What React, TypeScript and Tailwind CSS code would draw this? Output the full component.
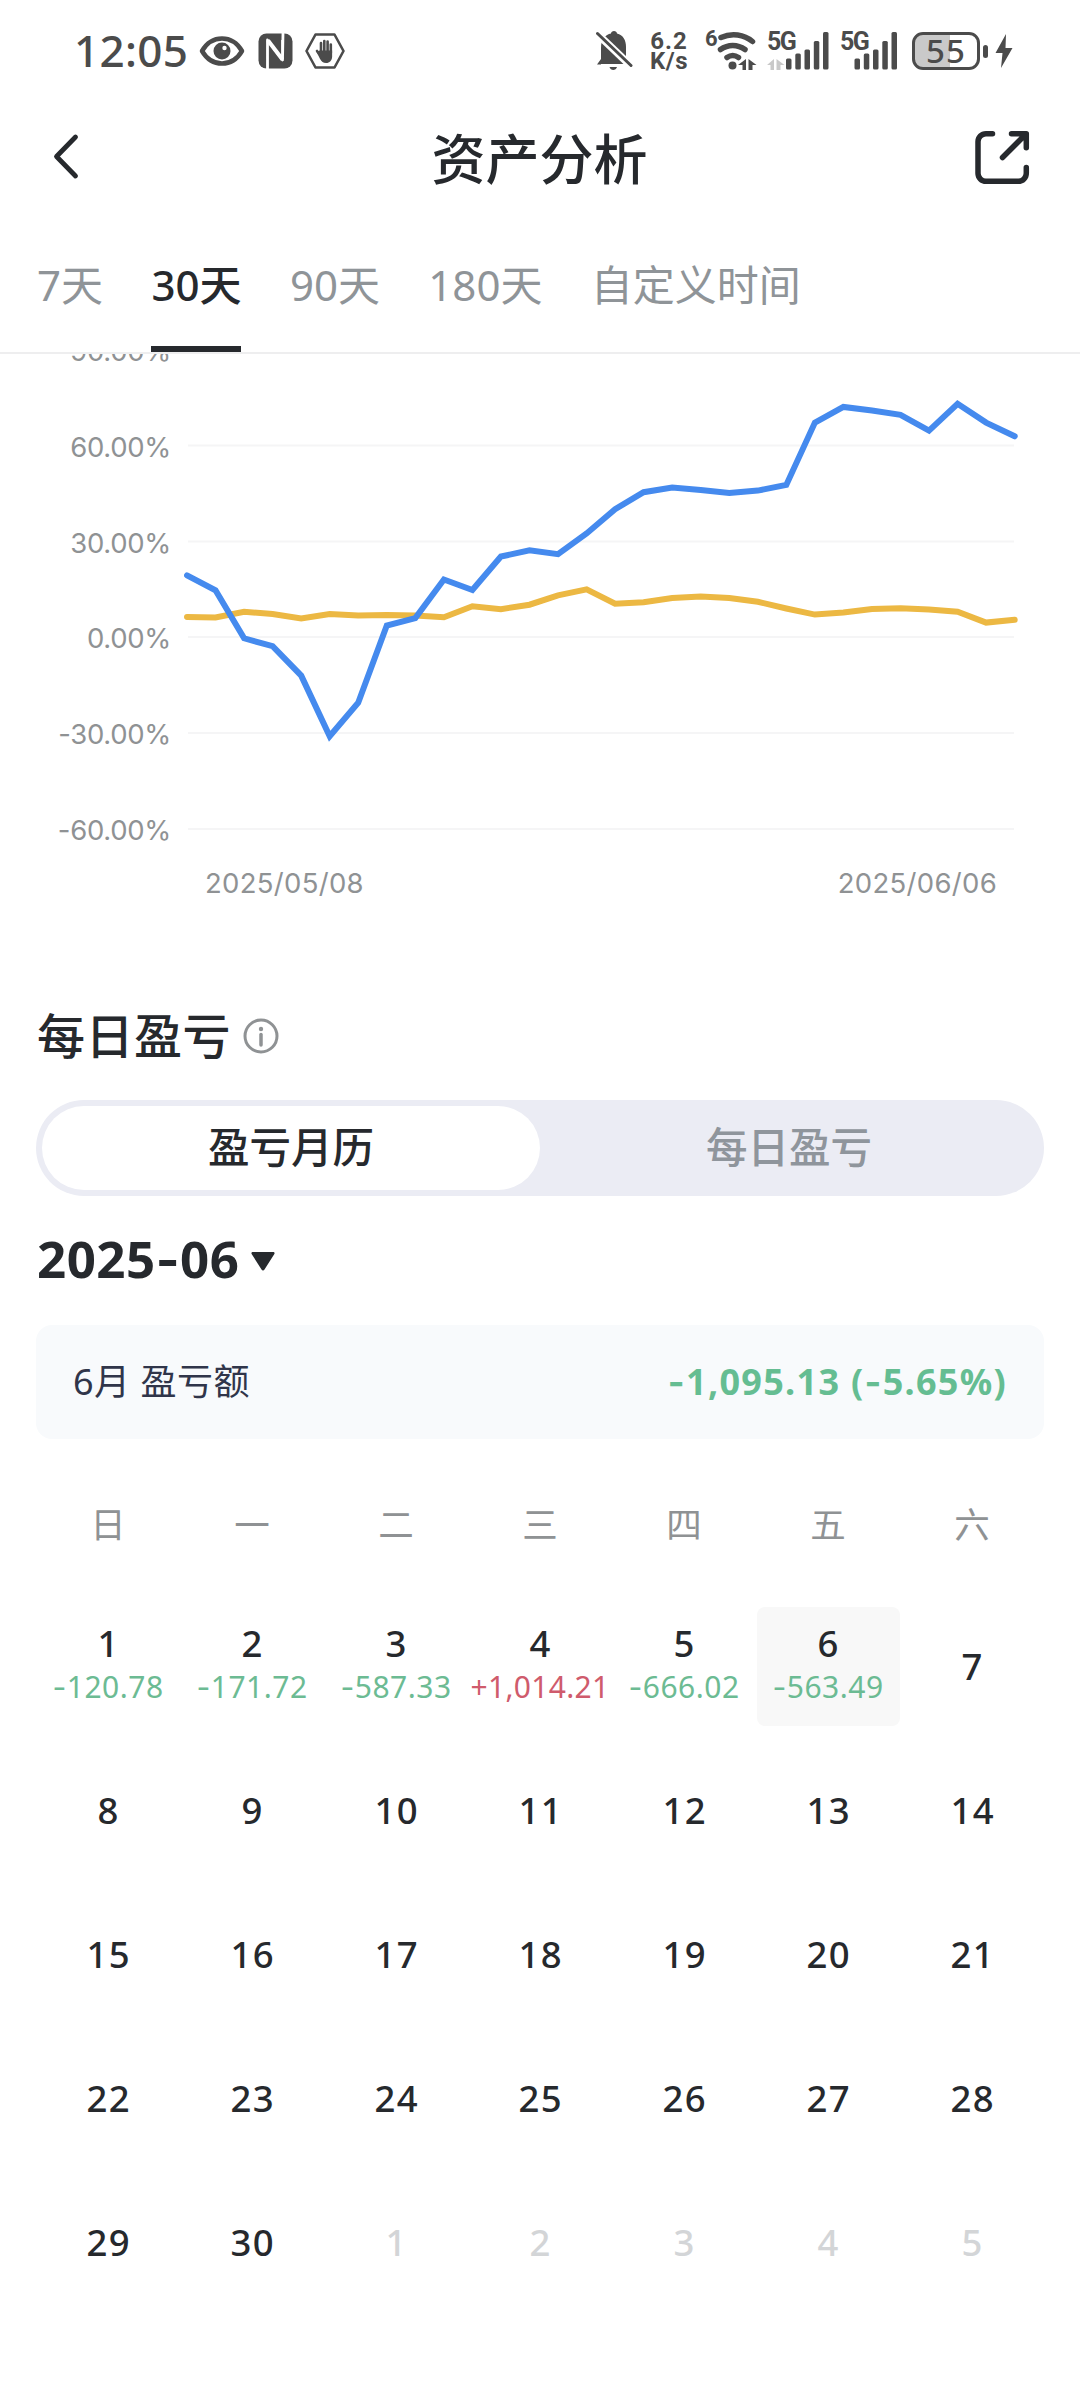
import React from 'react';

const DAILY_RETURN = [
  19.4, 14.7, -0.3, -2.8, -12, -31, -20.5, 3.7, 6, 18.1, 14.8, 25.3, 27.2, 26, 32.5,
  40.1, 45.4, 46.9, 46.1, 45.2, 45.9, 47.7, 67.2, 72.1, 71, 69.6, 64.7, 73.1, 67.2, 62.9,
];

const BENCHMARK = [
  6.4, 6.2, 8, 7.3, 5.9, 7.3, 6.8, 7, 6.8, 6.3, 9.7, 8.8, 10.2, 13.1, 15,
  10.5, 11, 12.3, 12.8, 12.3, 11.1, 9, 7.1, 7.8, 8.9, 9.1, 8.7, 8, 4.6, 5.5,
];

const Y_LABELS = ['90.00%', '60.00%', '30.00%', '0.00%', '-30.00%', '-60.00%'];

const TABS = ['7天', '30天', '90天', '180天', '自定义时间'];

const WEEKDAYS = ['日', '一', '二', '三', '四', '五', '六'];

const PROFITS: Record<number, string> = {
  1: '-120.78',
  2: '-171.72',
  3: '-587.33',
  4: '+1,014.21',
  5: '-666.02',
  6: '-563.49',
};

interface Day {
  day: number;
  profit?: string;
  outside?: boolean;
  selected?: boolean;
}

const DAYS: Day[] = [
  ...Array.from({ length: 30 }, (_, i) => ({
    day: i + 1,
    profit: PROFITS[i + 1],
    selected: i + 1 === 6,
  })),
  ...[1, 2, 3, 4, 5].map((day) => ({ day, outside: true })),
];

interface FigureProps {
  text: string;
  className?: string;
}

// Noto's hyphen is too short next to figures, so hyphens are set in Inter
const Figure: React.FC<FigureProps> = ({ text, className = '' }) => (
  <span className={`whitespace-nowrap ${className}`}>
    {text.split(/(-)/).map((part, i) =>
      part === '-' ? (
        <span key={i} className="font-['Inter']">
          -
        </span>
      ) : (
        part
      ),
    )}
  </span>
);

interface SignalProps {
  arrows?: boolean;
}

const Signal: React.FC<SignalProps> = ({ arrows = false }) => (
  <div className="relative h-10 w-[64px]">
    <span className="absolute left-0 top-0 font-['Roboto'] text-[25px] leading-[22px] font-bold tracking-[-1.5px]">
      5G
    </span>
    <svg
      className="absolute inset-0"
      width="64"
      height="40"
      viewBox={arrows ? '0 0 64 40' : '4.5 0 64 40'}
      fill="currentColor"
    >
      {arrows && (
        <path d="M0 34 7 28v11H3.500v-5zM9.500 28l8 6h-4v5h-4z" opacity="0.3" />
      )}
      <rect x="19" y="27.500" width="5.500" height="11" rx="1.500" />
      <rect x="28.300" y="22.500" width="5.500" height="16" rx="1.500" />
      <rect x="37.500" y="18.500" width="5.500" height="20" rx="1.500" />
      <rect x="46.800" y="10" width="5.500" height="28.500" rx="1.500" />
      <rect x="56" y="1" width="5.500" height="37.500" rx="1.500" />
    </svg>
  </div>
);

const StatusBar: React.FC = () => (
  <div className="flex h-[102px] items-center pl-[74px] pr-[67px] text-[#4b4b4b]">
    <span className="w-[125px] pb-0.5 font-['Noto_Sans'] text-[44px] leading-none font-medium tracking-[0.3px] whitespace-nowrap">
      12:05
    </span>

    <svg width="46" height="32" viewBox="0 0 46 32">
      <path
        d="M3 16C8 7.500 15 3.500 23 3.500S38 7.500 43 16C38 24.500 31 28.500 23 28.500S8 24.500 3 16Z"
        fill="none"
        stroke="currentColor"
        strokeWidth="4.500"
        strokeLinejoin="round"
      />
      <circle cx="23" cy="16" r="8.500" fill="currentColor" />
      <circle cx="25.500" cy="13" r="2.200" fill="#fff" />
    </svg>

    {/* NFC */}
    <svg className="ml-[13px]" width="35" height="36" viewBox="0 0 35 36">
      <rect x="0.500" y="0.500" width="34" height="35" rx="8" fill="currentColor" />
      <path
        d="M9.500 36V7L24.500 27V7M24.500 27 25 0"
        fill="none"
        stroke="#fff"
        strokeWidth="2.800"
        strokeLinejoin="round"
      />
      <path d="M10 7.500 24.500 26.500" stroke="#fff" strokeWidth="4" />
    </svg>

    <svg className="ml-[12px]" width="40" height="36" viewBox="0 0 40 36">
      <path
        d="M10.500 1.500h19L38.500 18l-9 16.500h-19L1.500 18z"
        fill="none"
        stroke="currentColor"
        strokeWidth="2.600"
        strokeLinejoin="round"
      />
      <g fill="none" stroke="currentColor" strokeWidth="2.600" strokeLinecap="round">
        <path d="M16 20V10M19.300 19V8M22.600 19V8.500M25.800 20v-8.500M16 23l-4-5" />
      </g>
      <path d="M14.700 17.500h12.400v6c0 4-2.500 6.500-6 6.500-3 0-4.500-1.500-6-4l-3.600-7z" fill="currentColor" />
    </svg>

    <div className="ml-auto flex items-center">
      <svg width="37" height="42" viewBox="0 0 37 42" fill="currentColor">
        <path d="M5 34V18C5 9 9.500 4.500 15 3.500c0-3.500 6-3.500 6 0C27 5 30 10 30 17v10l4 7z" />
        <path d="M1 34.500 5 29v5.500zM13.500 37h7.500c-1 4-6.500 4-7.500 0z" />
        <path d="M2 4.500 35 36" stroke="#fff" strokeWidth="7.500" />
        <path d="M1.500 3.500 35 35.500" stroke="currentColor" strokeWidth="3" strokeLinecap="round" />
      </svg>

      <div className="ml-[17px] flex w-[38px] flex-col items-center font-['Roboto'] text-[24px] leading-[20px] font-bold">
        <span className="tracking-[1px]">6.2</span>
        <span className="tracking-[0.5px]">K/s</span>
      </div>

      <div className="relative ml-[17px] h-10 w-[52px]">
        <span className="absolute left-0 -top-1 font-['Roboto'] text-[22px] leading-[24px] font-bold">6</span>
        <svg className="absolute inset-0" width="52" height="40" viewBox="0 0 52 40" fill="none">
          <g stroke="currentColor" strokeWidth="5.500" strokeLinecap="round">
            <path d="M16 6.500C27 1.500 39 3.500 47.500 10.500" />
            <path d="M15.500 18.500c7.500-5.500 17-5.500 24.500 0" />
            <path d="M22 26.500c3.500-2.500 8-2.500 11.500 0" />
          </g>
          <circle cx="27.500" cy="34.500" r="4" fill="currentColor" />
          <path d="M33 34 41 28v11h-3.500v-5zM43.500 28l8 6h-4v5h-4z" fill="currentColor" />
        </svg>
      </div>

      <div className="ml-[10px]">
        <Signal arrows />
      </div>
      <div className="ml-[9px]">
        <Signal />
      </div>

      <div className="ml-[8px] flex h-[38px] w-[68px] items-center justify-center rounded-[11px] border-[3px] border-current bg-linear-to-r from-[#c9c9c9] from-57% to-white to-57% pb-px">
        <span className="font-['Noto_Sans'] text-[33px] leading-none font-medium tracking-[1px]">55</span>
      </div>
      <div className="ml-[3px] h-[13px] w-[5px] rounded-sm bg-current" />
      <svg className="ml-[7px]" width="18" height="36" viewBox="0 0 18 36" fill="currentColor">
        <path d="M11 1 0.500 20h7L6 35 17.500 15h-7z" />
      </svg>
    </div>
  </div>
);

const Header: React.FC = () => (
  <header className="flex h-[112px] items-center justify-between pl-[51px] pr-[48px] text-[#26292d]">
    <svg className="mb-1" width="54" height="48" viewBox="0 0 54 48" fill="none">
      <path
        d="M24.500 5 5.500 24.500 24.500 44"
        stroke="currentColor"
        strokeWidth="4.800"
        strokeLinecap="round"
        strokeLinejoin="round"
      />
    </svg>
    <h1 className="pt-0.5 text-[54px] leading-none font-medium">资产分析</h1>
    <svg width="58" height="56" viewBox="0 0 58 56" fill="none">
      <g stroke="currentColor" strokeWidth="5.500" strokeLinecap="round" strokeLinejoin="round">
        <path d="M18.500 3.700H12A8 8 0 0 0 4 11.700v31.600a8 8 0 0 0 8 8h32.300a8 8 0 0 0 8-8V37.500" />
        <path d="M37.500 3.700h14.800v14M51.500 4.500 28.500 27.500" />
      </g>
    </svg>
  </header>
);

const RangeTabs: React.FC = () => (
  <nav className="flex h-[140px] items-end gap-[48.4px] border-b-2 border-[#eeeeef] pl-[37px]">
    {TABS.map((tab) => (
      <button
        key={tab}
        className={
          tab === '30天'
            ? 'flex h-[98px] items-start border-b-[6px] border-[#26292d] text-[42px] leading-[61px] font-medium text-[#26292d]'
            : 'flex h-[98px] items-start border-b-[6px] border-transparent text-[42px] leading-[61px] text-[#8f9498]'
        }
      >
        {tab}
      </button>
    ))}
  </nav>
);

const toPoints = (values: number[]) =>
  values.map((v, i) => `${(3 + i * 28.54).toFixed(1)},${(283.3 - v * 3.195).toFixed(1)}`).join(' ');

const ReturnChart: React.FC = () => (
  <section className="h-[590px] overflow-hidden font-['Inter'] text-[27.5px] text-[#8f9294]">
    <div className="flex h-[499px]">
      <div className="-mt-[52px] flex w-[171px] flex-col text-right tracking-[-0.3px]">
        {Y_LABELS.map((label) => (
          <span key={label} className="h-[95.8px] leading-[98px]">
            {label}
          </span>
        ))}
      </div>
      <svg className="ml-[13px]" width="840" height="499" viewBox="0 0 840 499" fill="none">
        {[91.5, 187.5, 283, 379, 475].map((y) => (
          <line key={y} x1="4" x2="830" y1={y} y2={y} stroke="#f5f5f6" strokeWidth="2" />
        ))}
        <polyline points={toPoints(BENCHMARK)} stroke="#ecb843" strokeWidth="6" strokeLinecap="round" />
        <polyline points={toPoints(DAILY_RETURN)} stroke="#458aee" strokeWidth="6" strokeLinecap="round" />
      </svg>
    </div>
    <div className="flex justify-between pl-[205px] pr-[83px] leading-[60px] tracking-[0.3px]">
      <span>2025/05/08</span>
      <span>2025/06/06</span>
    </div>
  </section>
);

interface DayCellProps {
  item: Day;
}

const DayCell: React.FC<DayCellProps> = ({ item }) => {
  const { day, profit, outside, selected } = item;

  return (
    <div className="flex h-[144px] items-center justify-center">
      <div
        className={
          selected
            ? 'flex h-[119px] w-[143px] flex-col items-center justify-center rounded-lg bg-[#f8f8f8]'
            : 'flex h-[119px] w-[143px] flex-col items-center justify-center'
        }
      >
        <span
          className={
            outside
              ? 'pl-[1.5px] text-[36.5px] leading-[42px] font-medium tracking-[1.4px] text-[#d3d5d7]'
              : 'pl-[1.5px] text-[36.5px] leading-[42px] font-medium tracking-[1.4px] text-[#26292d]'
          }
        >
          {day}
        </span>
        {profit && (
          <Figure
            text={profit}
            className={
              profit.startsWith('+')
                ? 'text-[30px] leading-[46px] tracking-[0.3px] text-[#cf5b6c]'
                : 'text-[30px] leading-[46px] tracking-[0.5px] text-[#6cbb93]'
            }
          />
        )}
      </div>
    </div>
  );
};

const App: React.FC = () => {
  return (
    <div className="h-[2400px] w-[1080px] overflow-hidden bg-white font-['Noto_Sans','Noto_Sans_CJK_SC',sans-serif] text-[#26292d]">
      <StatusBar />
      <Header />
      <RangeTabs />
      <ReturnChart />

      <section className="px-9 pt-[56px]">
        <div className="flex h-[72px] items-center gap-[12px] pl-px">
          <h2 className="text-[48px] leading-none font-medium tracking-[0.5px]">每日盈亏</h2>
          <svg width="36" height="36" viewBox="0 0 36 36" fill="none">
            <circle cx="18" cy="18" r="16" stroke="#8f9294" strokeWidth="3" />
            <circle cx="18" cy="11" r="2.200" fill="#8f9294" />
            <path d="M18 16.500V27" stroke="#8f9294" strokeWidth="3.500" strokeLinecap="round" />
          </svg>
        </div>

        <div className="mt-[28px] flex h-24 rounded-full bg-[#ebecf4] p-1.5 text-[41.5px]">
          <button className="flex-1 rounded-full bg-white pb-0.5 font-medium">盈亏月历</button>
          <button className="flex-1 pb-0.5 font-medium text-[#8f959c]">每日盈亏</button>
        </div>

        <div className="mt-[33px] flex h-[60px] items-center gap-[12px] pl-px">
          <Figure text="2025-06" className="text-[51px] leading-none font-bold tracking-[0.5px]" />
          <svg className="mt-1" width="24" height="20" viewBox="0 0 24 20" fill="currentColor">
            <path d="M2 1h20c1.500 0 2 1 1.200 2.200L13.500 18.500c-.8 1.200-2.200 1.200-3 0L.8 3.200C0 2 .5 1 2 1z" />
          </svg>
        </div>

        <div className="mt-[36px] flex h-[114px] items-center justify-between rounded-2xl bg-[#f8fafc] px-[37px]">
          <span className="text-[36px] tracking-[0.5px] text-[#30354a]">6月 盈亏额</span>
          <Figure text="-1,095.13 (-5.65%)" className="text-[36px] font-bold tracking-[1.3px] text-[#65bd92]" />
        </div>

        <div className="mt-[55px] grid grid-cols-7 text-center text-[35.5px] leading-[60px] text-[#8f9294]">
          {WEEKDAYS.map((name) => (
            <span key={name}>{name}</span>
          ))}
        </div>

        <div className="mt-[40px] grid grid-cols-7">
          {DAYS.map((item, index) => (
            <DayCell key={index} item={item} />
          ))}
        </div>
      </section>
    </div>
  );
};

export default App;
